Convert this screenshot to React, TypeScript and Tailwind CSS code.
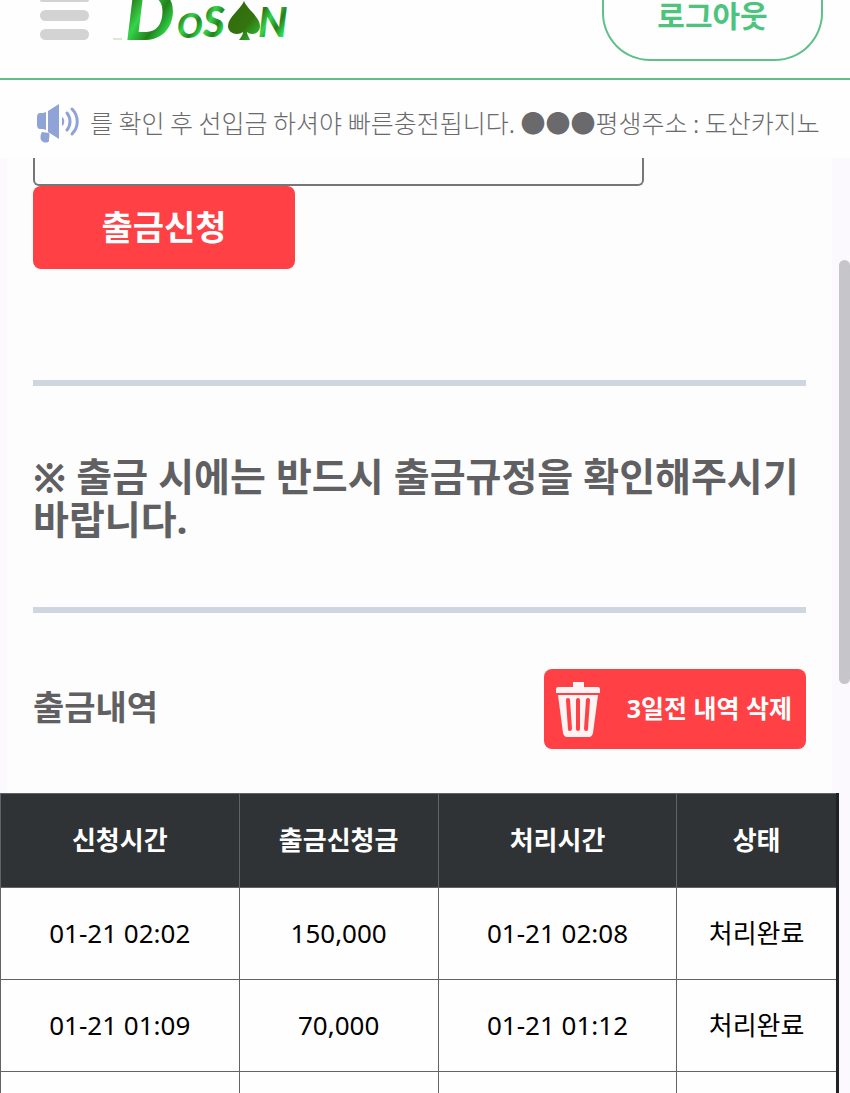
import React from "react";

const rows = [
  { requested: "01-21 02:02", amount: "150,000", processed: "01-21 02:08", status: "처리완료" },
  { requested: "01-21 01:09", amount: "70,000", processed: "01-21 01:12", status: "처리완료" },
  { requested: "", amount: "", processed: "", status: "" },
];

function Logo() {
  return (
    <svg viewBox="0 0 180 40" className="w-[180px] h-10" role="img" aria-label="DOSAN">
      <defs>
        <linearGradient id="leaf" x1="0" y1="0" x2="1" y2="1">
          <stop offset="0" stopColor="#1c9a2a" />
          <stop offset="0.2" stopColor="#2a6a12" />
          <stop offset="0.42" stopColor="#34d549" />
          <stop offset="0.62" stopColor="#23801b" />
          <stop offset="0.8" stopColor="#2fe14e" />
          <stop offset="1" stopColor="#2b6b10" />
        </linearGradient>
        <linearGradient id="spade" x1="0" y1="0" x2="1" y2="1">
          <stop offset="0" stopColor="#2f6a0b" />
          <stop offset="0.6" stopColor="#347410" />
          <stop offset="1" stopColor="#28c93c" />
        </linearGradient>
      </defs>
      <g fill="url(#leaf)" fontFamily="Lato, sans-serif" fontWeight="900" fontStyle="italic">
        <text x="12" y="40" fontSize="70">D</text>
        <text x="64" y="38" fontSize="34">O</text>
        <text x="90" y="37" fontSize="42">S</text>
        <text x="145" y="37" fontSize="41">N</text>
      </g>
      <path
        d="M131 1c3 8 16 16 16 25 0 8-9 10-13 6 0 3 2 5 3 8h-11c2-3 4-5 4-8-5 4-15 2-15-6 0-9 13-17 16-25z"
        fill="url(#spade)"
      />
      <path d="M0 39h9" stroke="#b9d3b5" strokeWidth="1" />
    </svg>
  );
}

function Megaphone() {
  return (
    <svg viewBox="0 0 44 42" className="w-11 h-[42px] shrink-0" aria-hidden="true">
      <g fill="#8fa3d6">
        <path d="M10 10v18l-3-1H4c-2 0-3-2-3-4v-8c0-2 1-4 3-4h3z" />
        <path d="M12 9L23 2v35l-11-7z" />
        <path d="M6 30l7 1c1 3 0 4 0 8-1 2-5 2-7 0-2-1-2-6 0-9z" />
        <path d="M26 15c3 1 3 8 0 9z" />
      </g>
      <g fill="none" stroke="#8fa3d6" strokeWidth="3" strokeLinecap="round">
        <path d="M31 11c4 5 4 12 0 17" />
        <path d="M36 7c7 7 7 18 0 25" />
      </g>
    </svg>
  );
}

function TrashIcon() {
  return (
    <svg viewBox="0 0 44 56" className="w-11 h-14 shrink-0" aria-hidden="true">
      <path d="M17 1h11v5h14q2 0 2 3v3H0V9q0-3 2-3h15z" fill="#fff3f3" />
      <path d="M2 14h40l-5 38q-1 4-4 4H11q-3 0-4-4z" fill="#fff3f3" />
      <path d="M12 19l2 29M22 19v29M32 19l-2 29" stroke="#ff4044" strokeWidth="4" strokeLinecap="round" />
    </svg>
  );
}

export default function App() {
  return (
    <div className="relative h-screen overflow-hidden bg-[#fbf9fd] text-[#606063] font-['Noto_Sans','Noto_Sans_CJK_KR',sans-serif]">
      {/* HEADER */}
      <header className="flex h-20 items-start justify-between border-b-2 border-[#63bd8b] bg-[#fefefe] pl-10 pr-[27px]">
        <div className="flex items-start gap-6">
          <button type="button" aria-label="메뉴" className="flex w-[49px] flex-col gap-2">
            <span className="h-[2px] w-full rounded-b-full bg-[#d3d3d3]" />
            <span className="h-[11px] w-full rounded-full bg-[#d3d3d3]" />
            <span className="h-[11px] w-full rounded-full bg-[#d3d3d3]" />
          </button>
          <Logo />
        </div>
        <button
          type="button"
          className="h-[61px] w-[221px] rounded-b-[48px] border-2 border-t-0 border-[#5fc08c] pb-7 text-[30px] leading-8 font-bold text-[#4dc47d]"
        >
          로그아웃
        </button>
      </header>

      {/* NOTICE */}
      <div className="flex h-[78px] items-center gap-[10px] bg-[#fefefe] pl-9 pt-2">
        <Megaphone />
        <p className="whitespace-nowrap text-[25px] font-light text-[#6a6a6d] font-['Noto_Sans_CJK_KR',sans-serif]">
          를 확인 후 선입금 하셔야 빠른충전됩니다. ●●●평생주소 : 도산카지노
        </p>
      </div>

      <div className="pr-[11px]">
        <main className="mx-[7px] bg-[#fdfdfd] px-[26px]">
          <form className="flex flex-col items-start">
            <input
              type="text"
              aria-label="출금금액"
              className="h-7 w-[611px] max-w-full rounded-b-md border-2 border-t-0 border-[#77777a] px-4 outline-none"
            />
            <button
              type="button"
              className="h-[83px] w-[262px] rounded-lg bg-[#ff4044] text-[34px] font-bold text-white"
            >
              출금신청
            </button>
          </form>

          <hr className="mt-[111px] border-0 h-[6px] bg-[#d0d6df]" />
          <p className="pt-[68px] pb-[67px] text-[39px] leading-[43px] font-bold">
            ※ 출금 시에는 반드시 출금규정을 확인해주시기 바랍니다.
          </p>
          <hr className="border-0 h-[6px] bg-[#d0d6df]" />

          <div className="mt-14 mb-11 flex items-center justify-between">
            <h2 className="pb-1 text-[34px] font-bold">출금내역</h2>
            <button
              type="button"
              className="flex h-20 w-[262px] items-center justify-between rounded-lg bg-[#ff4044] pl-3 pr-[14px] text-[25px] font-bold text-white"
            >
              <TrashIcon />
              3일전 내역 삭제
            </button>
          </div>

          {/* HISTORY */}
          <div className="-mx-[33px]">
            <table className="w-full table-fixed border-collapse border border-r-3 border-[#636367] border-r-[#202124] bg-[#fefefe] text-center text-[26px] text-black">
              <thead className="bg-[#2f3336] text-white">
                <tr className="h-[94px]">
                  <th className="w-[28.5%] border border-[#636367]">신청시간</th>
                  <th className="w-[23.8%] border border-[#636367]">출금신청금</th>
                  <th className="w-[28.5%] border border-[#636367]">처리시간</th>
                  <th className="border-b border-[#636367]">상태</th>
                </tr>
              </thead>
              <tbody>
                {rows.map((row, i) => (
                  <tr key={i} className="h-[92px]">
                    <td className="border border-[#636367]">{row.requested}</td>
                    <td className="border border-[#636367]">{row.amount}</td>
                    <td className="border border-[#636367]">{row.processed}</td>
                    <td className="border-b border-[#636367]">{row.status}</td>
                  </tr>
                ))}
              </tbody>
            </table>
          </div>
        </main>
      </div>

      {/* SCROLL THUMB */}
      <div className="absolute right-0 top-[260px] h-[424px] w-[11px] rounded-full bg-[#c6c5ca]" />
    </div>
  );
}
